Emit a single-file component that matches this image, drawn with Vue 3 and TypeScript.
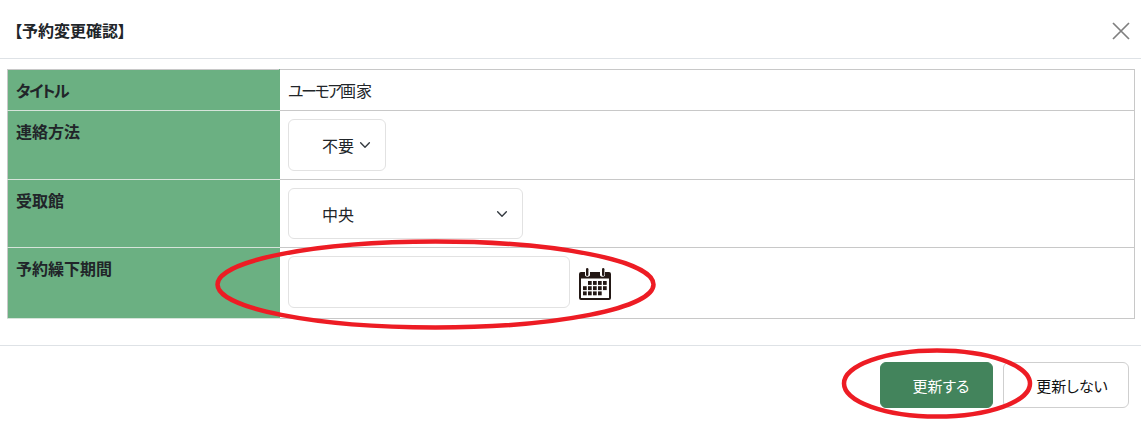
<script setup lang="ts">
const cells: number[][] = [];
for (let r = 0; r < 3; r++) {
  for (let c = 0; c < 5; c++) {
    if (!(r === 0 && c === 0) && !(r === 2 && c > 3)) cells.push([c, r]);
  }
}
</script>

<template>
  <div class="modal">
    <header class="head">
      <h5 class="title">【予約変更確認】</h5>
      <svg class="close" viewBox="0 0 18 18" width="18" height="18" aria-label="閉じる">
        <path d="M1 1 17 17M17 1 1 17" stroke="#7f7f7f" stroke-width="1.7" fill="none" />
      </svg>
    </header>
    <div class="body">
      <table class="grid">
        <tbody>
          <tr class="r1">
            <th><span class="kana-th">タイトル</span></th>
            <td class="plain"><span class="kana">ユーモア</span>画家</td>
          </tr>
          <tr class="r2">
            <th>連絡方法</th>
            <td>
              <div class="select small">
                <span>不要</span>
                <svg class="chev" viewBox="0 0 16 16" width="16" height="16"><path d="M3 5.5 8 10.5 13 5.5" fill="none" stroke="#343a40" stroke-width="1.6" stroke-linecap="round" stroke-linejoin="round" /></svg>
              </div>
            </td>
          </tr>
          <tr class="r3">
            <th>受取館</th>
            <td>
              <div class="select wide">
                <span>中央</span>
                <svg class="chev" viewBox="0 0 16 16" width="16" height="16"><path d="M3 5.5 8 10.5 13 5.5" fill="none" stroke="#343a40" stroke-width="1.6" stroke-linecap="round" stroke-linejoin="round" /></svg>
              </div>
            </td>
          </tr>
          <tr class="r4">
            <th>予約繰下期間</th>
            <td>
              <div class="date">
                <div class="input"></div>
                <svg class="cal" viewBox="0 0 34 34" width="34" height="34">
                  <path d="M3 5h4v3.5a3 3 0 0 0 5 0V5h10v3.5a3 3 0 0 0 5 0V5h4a2 2 0 0 1 2 2v24a2 2 0 0 1-2 2H3a2 2 0 0 1-2-2V7a2 2 0 0 1 2-2z" fill="#231815" />
                  <rect x="3" y="11.5" width="28" height="19.5" fill="#fff" />
                  <rect x="8" y="1" width="2.4" height="8" rx="1.2" fill="#231815" />
                  <rect x="24" y="1" width="2.4" height="8" rx="1.2" fill="#231815" />
                  <rect v-for="(p, i) in cells" :key="i" :x="5 + p[0] * 5" :y="14 + p[1] * 5.2" width="3.7" height="3.9" fill="#231815" />
                </svg>
              </div>
            </td>
          </tr>
        </tbody>
      </table>
    </div>
    <footer class="foot">
      <button class="btn primary" type="button">更新する</button>
      <button class="btn secondary" type="button">更新しない</button>
    </footer>
    <svg class="marks" width="1141" height="431" viewBox="0 0 1141 431">
      <ellipse cx="435.5" cy="284.5" rx="218" ry="43" />
      <ellipse cx="937" cy="383.5" rx="93" ry="33" />
    </svg>
  </div>
</template>

<style>
html, body { margin: 0; background: #fff; }
</style>

<style scoped>
.modal {
  position: relative;
  width: 1141px;
  height: 431px;
  overflow: hidden;
  background: #fff;
  color: #212529;
  font-family: "Noto Sans CJK JP", "Liberation Sans", sans-serif;
  font-size: 16px;
  font-feature-settings: "palt";
}
.head {
  box-sizing: border-box;
  height: 59px;
  border-bottom: 1px solid #dee2e6;
  display: flex;
  align-items: center;
  justify-content: space-between;
  padding: 3px 11px 0 14px;
}
.title {
  margin: 0;
  font-size: 16px;
  font-weight: 700;
  line-height: 1.2;
}
.close { display: block; }
.body { padding: 10px 6px 26px 7px; }
.grid {
  width: 1128px;
  border-collapse: collapse;
  table-layout: fixed;
}
.grid th, .grid td {
  border: 1px solid #c8c8c8;
  padding: 8px;
  vertical-align: top;
  text-align: left;
  box-sizing: border-box;
}
.grid th {
  width: 272px;
  background: #6bb082;
  border-color: #c8c8c8 #6bb082 #d6e4da #c8c8c8;
  font-size: 16px;
  font-weight: 700;
  line-height: 24px;
  color: #212529;
}
.kana-th { letter-spacing: -1.5px; }
.kana { letter-spacing: -2.4px; }
.r1 { height: 41px; }
.r2 { height: 69px; }
.r3 { height: 68px; }
.r4 { height: 71px; }
.plain { font-size: 16px; line-height: 24px; vertical-align: middle; }
.grid .r1 th, .grid .r1 td { padding-top: 8px; padding-bottom: 6px; }
.select {
  display: flex;
  align-items: center;
  justify-content: space-between;
  box-sizing: border-box;
  height: 52px;
  padding: 0 13px 0 33px;
  border: 1px solid #e2e2e2;
  border-radius: 6px;
  background: #fff;
  font-size: 16px;
}
.small { width: 98px; }
.wide { width: 235px; height: 51px; padding-right: 13px; }
.chev { width: 14px; height: 14px; flex: none; }
.date { display: flex; align-items: center; gap: 8px; }
.input {
  box-sizing: border-box;
  width: 282px;
  height: 52px;
  border: 1px solid #e2e2e2;
  border-radius: 6px;
  background: #fff;
}
.cal { display: block; margin-top: 4px; }
.foot {
  border-top: 1px solid #dee2e6;
  display: flex;
  justify-content: flex-end;
  gap: 10px;
  padding: 16px 12px 0 0;
}
.btn {
  box-sizing: border-box;
  height: 46px;
  border-radius: 6px;
  font-family: inherit;
  font-feature-settings: inherit;
  font-size: 15px;
  padding: 0;
}
.primary {
  width: 113px;
  background: #43845c;
  border: 1px solid #43845c;
  color: #fff;
  padding-left: 9px;
}
.secondary {
  width: 126px;
  background: #fff;
  border: 1px solid #cfcfcf;
  color: #111;
  padding-left: 12px;
}
.marks {
  position: absolute;
  left: 0;
  top: 0;
  pointer-events: none;
}
.marks ellipse {
  fill: none;
  stroke: #ed1c24;
  stroke-width: 4.5;
}
</style>
